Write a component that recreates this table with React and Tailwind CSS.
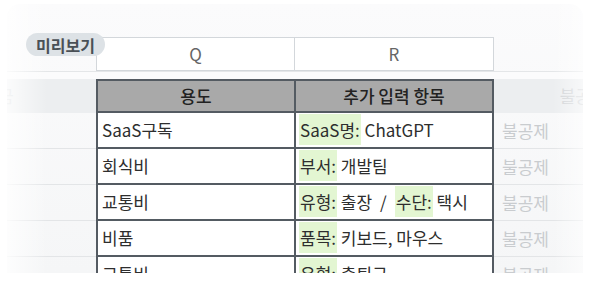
const rows = [
  { use: 'SaaS구독', extra: [['SaaS명:', 'ChatGPT']] },
  { use: '회식비', extra: [['부서:', '개발팀']] },
  { use: '교통비', extra: [['유형:', '출장'], ['수단:', '택시']] },
  { use: '비품', extra: [['품목:', '키보드, 마우스']] },
  { use: '교통비', extra: [['유형:', '출퇴근']] },
]

function Tag({ label, value }) {
  return (
    <span>
      <span className="bg-[#e3f6d2] px-[1px] py-[3px]">{label}</span> {value}
    </span>
  )
}

function Row({ row }) {
  return (
    <div className="grid h-[36px] grid-cols-[89px_198px_200px_89px]">
      <div className="border-b border-[#e3e5e7]" />
      <div className="flex items-center border-b-2 border-l-2 border-[#545b62] bg-white pl-[4px] text-[#2e2e2e]">
        {row.use}
      </div>
      <div className="flex items-center whitespace-nowrap border-x-2 border-b-2 border-[#545b62] bg-white pl-[3px] text-[#2e2e2e]">
        {row.extra.map((e, i) => (
          <span key={i} className="flex">
            {i > 0 && <span className="px-[8px]">/</span>}
            <Tag label={e[0]} value={e[1]} />
          </span>
        ))}
      </div>
      <div className="flex items-center border-b border-[#e3e5e7] pl-[8px] text-[#c9cccf]">불공제</div>
    </div>
  )
}

export default function App() {
  return (
    <div
      className="h-[286px] w-[608px] bg-white pl-[7px] pt-[4px] text-[17px]"
      style={{ fontFamily: "'Noto Sans CJK KR', 'Noto Sans', sans-serif" }}
    >
      <div className="relative h-[269px] w-[576px] overflow-hidden rounded-t-[14px] bg-gradient-to-b from-[#fbfbfc] to-[#f5f6f7]">
        <div className="h-[33px]" />
        <div className="grid h-[35px] grid-cols-[89px_198px_200px_89px] border-b border-[#e4e6e8]">
          <div />
          <div className="flex items-center justify-center border-y border-l border-[#d3d7db] bg-white text-[#666]">Q</div>
          <div className="flex items-center justify-center border border-[#d3d7db] bg-white text-[#666]">R</div>
          <div />
        </div>
        <div className="h-[7px] bg-[#fbfbfc]" />
        <div className="grid h-[34px] grid-cols-[89px_198px_200px_89px]">
          <div className="flex items-center bg-[#eceef0] text-[#d0d3d6]">
            <span className="-ml-[9px]">금</span>
          </div>
          <div className="flex items-center justify-center border-y-2 border-l-2 border-[#545b62] bg-[#a9a9a9] font-medium text-[#222]">
            용도
          </div>
          <div className="flex items-center justify-center border-2 border-[#545b62] bg-[#a9a9a9] font-medium text-[#222]">
            추가 입력 항목
          </div>
          <div className="flex items-center justify-end bg-[#eceef0] text-[#d0d3d6]">
            <span className="-mr-[8px]">불공</span>
          </div>
        </div>
        {rows.map((r, i) => (
          <Row key={i} row={r} />
        ))}
        <div className="pointer-events-none absolute inset-y-0 left-0 w-[40px] bg-gradient-to-r from-white/80 to-transparent" />
        <div className="pointer-events-none absolute inset-y-0 right-0 w-[30px] bg-gradient-to-l from-white/60 to-transparent" />
        <div className="absolute left-[19px] top-[29px] flex h-[23px] items-center rounded-full bg-[#dde2e6] px-[10px] text-[16px] font-bold text-[#4a5056]">
          미리보기
        </div>
      </div>
    </div>
  )
}
